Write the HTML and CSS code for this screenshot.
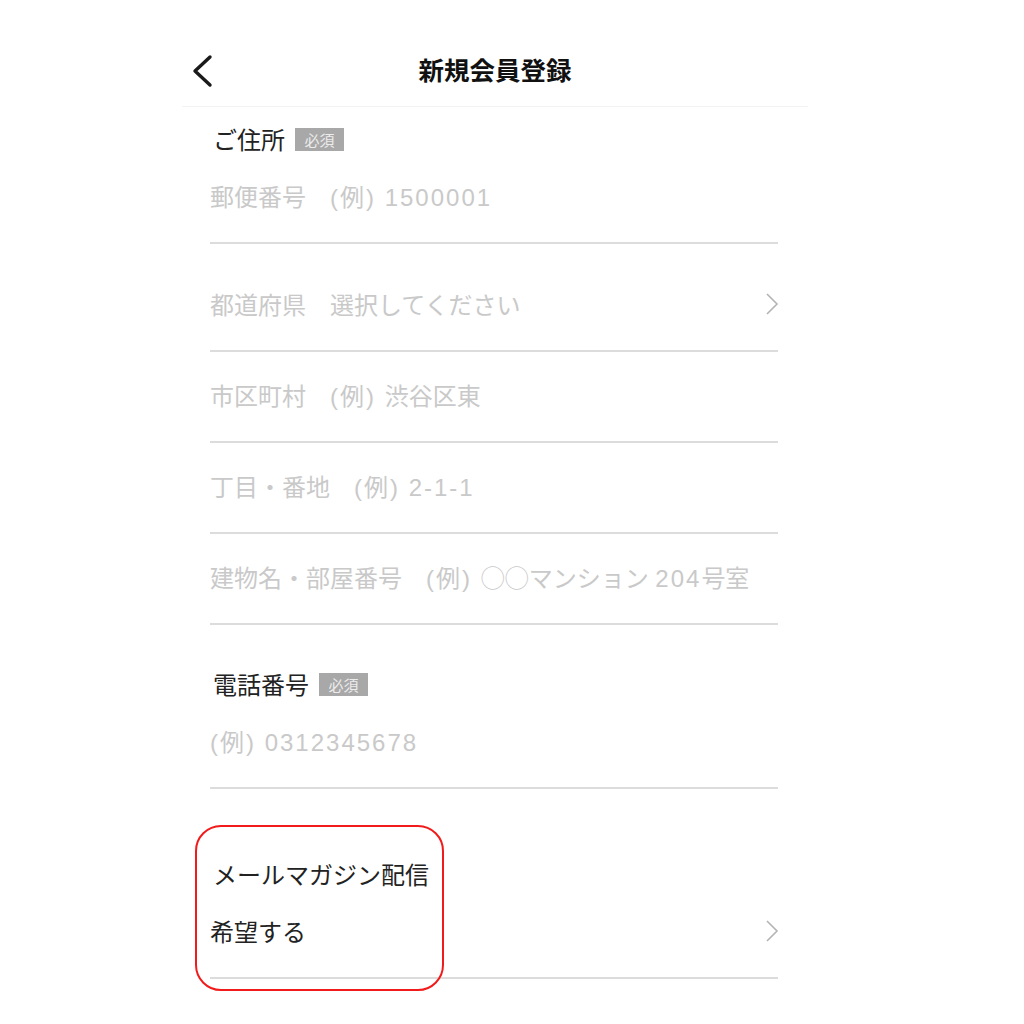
FILE: index.html
```html
<!DOCTYPE html>
<html lang="ja">
<head>
<meta charset="utf-8">
<title>新規会員登録</title>
<link rel="stylesheet" href="styles.css">
</head>
<body>
<div class="screen">
  <header class="header">
    <button class="back" aria-label="戻る">
      <svg width="22" height="34" viewBox="0 0 22 34"><polyline points="19,3 4,17 19,31" fill="none" stroke="#1a1a1a" stroke-width="3.4" stroke-linecap="round" stroke-linejoin="round"/></svg>
    </button>
    <h1 class="title">新規会員登録</h1>
  </header>

  <form class="form">
    <section class="section section-address">
      <div class="label"><span>ご住所</span><span class="badge">必須</span></div>
      <div class="row"><span class="ph">郵便番号　<span class="lat">(例) 1500001</span></span></div>
      <div class="row row-select">
        <span class="ph">都道府県　選択してください</span>
        <svg class="chev" width="14" height="24" viewBox="0 0 14 24"><polyline points="2,2 12,12 2,22" fill="none" stroke="#b4b4b4" stroke-width="1.6"/></svg>
      </div>
      <div class="row"><span class="ph">市区町村　<span class="lat">(例) </span>渋谷区東</span></div>
      <div class="row"><span class="ph">丁目・番地　<span class="lat">(例) 2-1-1</span></span></div>
      <div class="row"><span class="ph">建物名・部屋番号　<span class="lat">(例) </span>◯◯マンション <span class="lat">204</span>号室</span></div>
    </section>

    <section class="section section-phone">
      <div class="label"><span>電話番号</span><span class="badge">必須</span></div>
      <div class="row"><span class="ph"><span class="lat">(例) 0312345678</span></span></div>
    </section>

    <section class="section section-mail">
      <div class="highlight"></div>
      <div class="label"><span>メールマガジン配信</span></div>
      <div class="row">
        <span class="value">希望する</span>
        <svg class="chev" width="14" height="24" viewBox="0 0 14 24"><polyline points="2,2 12,12 2,22" fill="none" stroke="#b4b4b4" stroke-width="1.6"/></svg>
      </div>
    </section>
  </form>
</div>
</body>
</html>
```

FILE: styles.css
```css
* { box-sizing: border-box; }
html, body { margin: 0; padding: 0; background: #fff; }
body {
  font-family: "Liberation Sans", "Noto Sans CJK JP", sans-serif;
  color: #222;
  min-height: 1024px;
}
.screen {
  width: 626px;
  margin-left: 182px;
  padding-bottom: 40px;
}
.header {
  height: 107px;
  border-bottom: 1px solid #f3f3f3;
  display: flex;
  align-items: center;
  justify-content: center;
  position: relative;
}
.back {
  position: absolute;
  left: 9px;
  top: 54px;
  border: 0;
  background: none;
  padding: 0;
  margin: 0;
  width: 22px;
  height: 34px;
  display: block;
}
.back svg { display: block; }
.title {
  margin: 0;
  margin-top: 32px;
  font-family: "Noto Sans CJK JP", sans-serif;
  font-weight: 700;
  font-size: 25.5px;
  line-height: 32px;
  color: #111;
}
.form {
  padding: 0 30px 0 28px;
}
.section { position: relative; }
.label {
  display: flex;
  align-items: center;
  padding-left: 3px;
  font-size: 24px;
  line-height: 26px;
  height: 46px;
  padding-top: 18px;
  color: #222;
  font-family: "Noto Sans CJK JP", sans-serif;
}
.section-phone .label { height: 73px; padding-top: 45px; }
.section-mail .label { height: 99px; padding-top: 71px; }
.badge {
  display: inline-flex;
  align-items: center;
  justify-content: center;
  margin-left: 10px;
  width: 49px;
  height: 23px;
  background: #a8a8a8;
  color: #ececec;
  font-size: 15px;
  line-height: 23px;
}
.row {
  height: 91px;
  border-bottom: 2px solid #dcdcdc;
  display: flex;
  align-items: center;
  justify-content: space-between;
  font-size: 24px;
  padding-bottom: 4px;
}
.row-select { height: 108px; padding-top: 17px; }
.ph { color: #c9c9c9; }
.lat { letter-spacing: 2px; }
.value { color: #222; font-family: "Noto Sans CJK JP", sans-serif; }
.chev { display: block; margin-right: -1px; }
.highlight {
  position: absolute;
  left: -15px;
  top: 36px;
  width: 249px;
  height: 166px;
  border: 2.5px solid #f21b1b;
  border-radius: 26px;
  pointer-events: none;
}
```
